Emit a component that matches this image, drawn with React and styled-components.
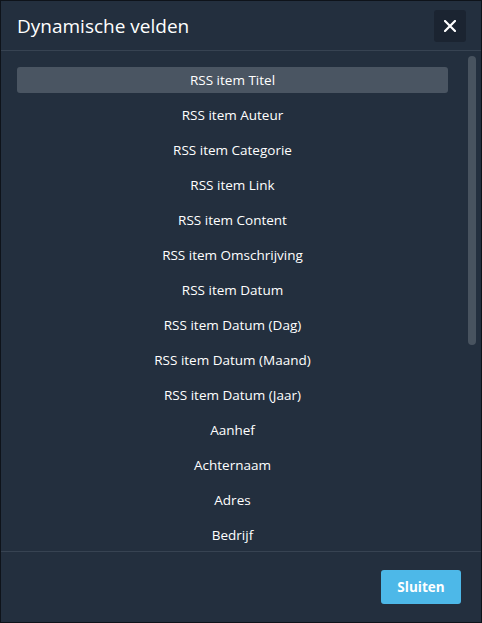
import React from "react";
import styled, { createGlobalStyle } from "styled-components";

const Global = createGlobalStyle`
  html, body { margin: 0; padding: 0; background: #0d1117; }
  body { font-family: "Open Sans", "Noto Sans", sans-serif; }
  * { box-sizing: border-box; }
`;

const Modal = styled.div`
  width: 482px;
  height: 623px;
  border: 1px solid #0e131a;
  background: #232f3e;
  display: flex;
  flex-direction: column;
  color: #fff;
`;

const Header = styled.div`
  height: 50px;
  flex: none;
  display: flex;
  align-items: center;
  justify-content: space-between;
  padding: 0 15px 0 16px;
  border-bottom: 1px solid #374352;
`;

const Title = styled.h1`
  margin: 0;
  font-size: 19px;
  font-weight: 400;
  color: #fff;
`;

const CloseButton = styled.button`
  width: 32px;
  height: 32px;
  margin-top: 1px;
  border: none;
  border-radius: 3px;
  background: #1b2431;
  color: #fff;
  display: flex;
  align-items: center;
  justify-content: center;
  padding: 0;
  cursor: pointer;
`;

const Body = styled.div`
  flex: 1;
  min-height: 0;
  display: flex;
`;

const Viewport = styled.div`
  flex: 1;
  min-width: 0;
  overflow-y: auto;
  scrollbar-width: none;
  padding: 16px;
  &::-webkit-scrollbar { display: none; }
`;

const ScrollRail = styled.div`
  width: 17px;
  flex: none;
  padding: 5px 5px 5px 4px;
`;

const ScrollThumb = styled.div`
  width: 8px;
  height: 289px;
  border-radius: 4px;
  background: #48535f;
`;

const List = styled.ul`
  list-style: none;
  margin: 0;
  padding: 0;
  display: flex;
  flex-direction: column;
  gap: 9px;
`;

const Item = styled.li`
  height: 26px;
  display: flex;
  align-items: center;
  justify-content: center;
  font-size: 13.5px;
  color: #fff;
  border-radius: 3px;
  background: ${(p) => (p.$active ? "#4a5562" : "transparent")};
  cursor: pointer;
`;

const Footer = styled.div`
  height: 71px;
  flex: none;
  border-top: 1px solid #374352;
  display: flex;
  align-items: center;
  justify-content: flex-end;
  padding: 0 20px;
`;

const PrimaryButton = styled.button`
  width: 80px;
  height: 34px;
  border: none;
  border-radius: 3px;
  background: #4db8e8;
  color: #fff;
  font-family: "Open Sans", "Noto Sans", sans-serif;
  font-weight: 700;
  font-size: 13.5px;
  cursor: pointer;
`;

const items = [
  "RSS item Titel",
  "RSS item Auteur",
  "RSS item Categorie",
  "RSS item Link",
  "RSS item Content",
  "RSS item Omschrijving",
  "RSS item Datum",
  "RSS item Datum (Dag)",
  "RSS item Datum (Maand)",
  "RSS item Datum (Jaar)",
  "Aanhef",
  "Achternaam",
  "Adres",
  "Bedrijf",
  "E-mailadres",
  "Geboortedatum",
  "Land",
  "Plaats",
  "Postcode",
  "Telefoonnummer",
  "Tussenvoegsel",
  "Voornaam",
  "Uitschrijflink",
  "Webversie",
];

export default function App() {
  return (
    <>
      <Global />
      <Modal>
        <Header>
          <Title>Dynamische velden</Title>
          <CloseButton aria-label="Sluiten">
            <svg width="12" height="12" viewBox="0 0 12 12">
              <path d="M1 1L11 11M11 1L1 11" stroke="#fff" strokeWidth="2.2" strokeLinecap="square" />
            </svg>
          </CloseButton>
        </Header>
        <Body>
          <Viewport>
            <List>
              {items.map((t, i) => (
                <Item key={t} $active={i === 0}>{t}</Item>
              ))}
            </List>
          </Viewport>
          <ScrollRail>
            <ScrollThumb />
          </ScrollRail>
        </Body>
        <Footer>
          <PrimaryButton>Sluiten</PrimaryButton>
        </Footer>
      </Modal>
    </>
  );
}
